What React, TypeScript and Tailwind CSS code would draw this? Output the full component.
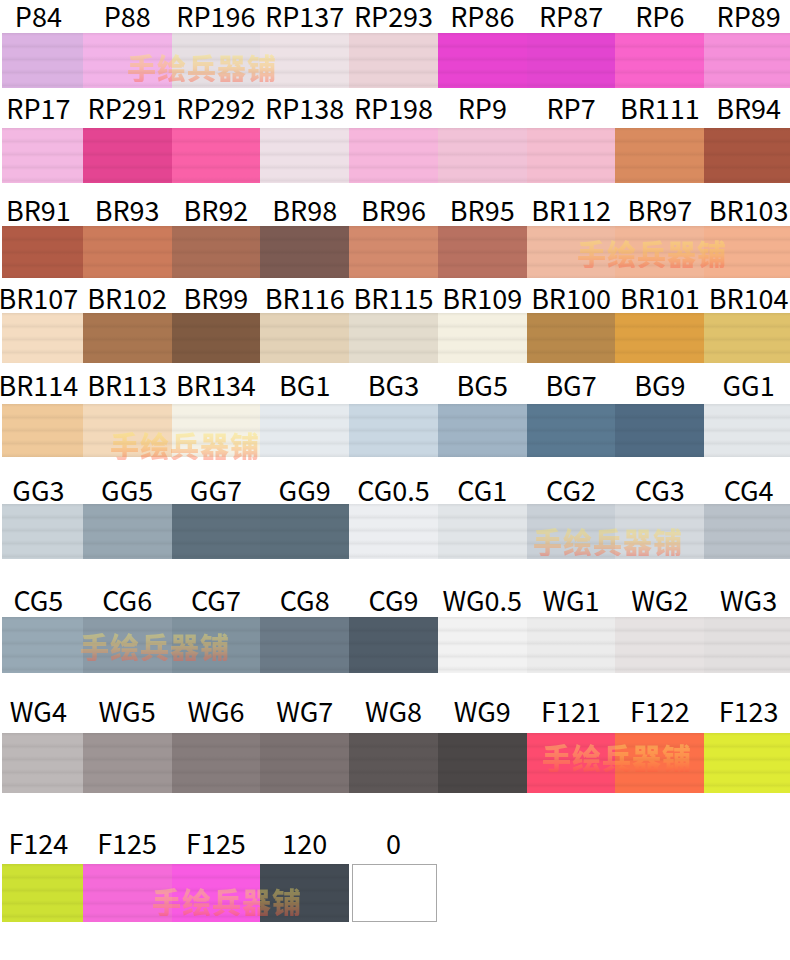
const STRIPES =
  "bg-[repeating-linear-gradient(180deg,rgba(0,0,0,0.06)_0px,rgba(0,0,0,0)_3px,rgba(0,0,0,0)_10px,rgba(0,0,0,0.04)_13px)]";

type Swatch = { name: string; bg: string; extra?: string };
type Row = { mt: string; gap: string; h: string; items: Swatch[] };

const rows: Row[] = [
  {
    mt: "mt-[1px]",
    gap: "mt-[2px]",
    h: "h-[55px]",
    items: [
      { name: "P84", bg: "bg-[#dbb2e2]" },
      { name: "P88", bg: "bg-[#f2b3e8]" },
      { name: "RP196", bg: "bg-[#e6dfe3]" },
      { name: "RP137", bg: "bg-[#ede2e6]" },
      { name: "RP293", bg: "bg-[#ebd2d7]" },
      { name: "RP86", bg: "bg-[#e844d1]" },
      { name: "RP87", bg: "bg-[#e345d0]" },
      { name: "RP6", bg: "bg-[#f964cb]" },
      { name: "RP89", bg: "bg-[#f590da]" },
    ],
  },
  {
    mt: "mt-[5px]",
    gap: "mt-[5px]",
    h: "h-[55px]",
    items: [
      { name: "RP17", bg: "bg-[#f3b8e2]" },
      { name: "RP291", bg: "bg-[#e44592]" },
      { name: "RP292", bg: "bg-[#fa61a8]" },
      { name: "RP138", bg: "bg-[#eee0e7]" },
      { name: "RP198", bg: "bg-[#f6b6dc]" },
      { name: "RP9", bg: "bg-[#f1c2d7]" },
      { name: "RP7", bg: "bg-[#f4bdd0]" },
      { name: "BR111", bg: "bg-[#d98b5f]" },
      { name: "BR94", bg: "bg-[#a85641]" },
    ],
  },
  {
    mt: "mt-[12px]",
    gap: "mt-[1px]",
    h: "h-[52px]",
    items: [
      { name: "BR91", bg: "bg-[#b15b46]" },
      { name: "BR93", bg: "bg-[#cc7b5b]" },
      { name: "BR92", bg: "bg-[#a96d56]" },
      { name: "BR98", bg: "bg-[#7c5b53]" },
      { name: "BR96", bg: "bg-[#d38a6d]" },
      { name: "BR95", bg: "bg-[#b87161]" },
      { name: "BR112", bg: "bg-[#efbaa2]" },
      { name: "BR97", bg: "bg-[#f1b698]" },
      { name: "BR103", bg: "bg-[#f3b18f]" },
    ],
  },
  {
    mt: "mt-[5px]",
    gap: "mt-[0px]",
    h: "h-[50px]",
    items: [
      { name: "BR107", bg: "bg-[#f4dcc1]" },
      { name: "BR102", bg: "bg-[#a97650]" },
      { name: "BR99", bg: "bg-[#805b42]" },
      { name: "BR116", bg: "bg-[#e3d2b7]" },
      { name: "BR115", bg: "bg-[#e3dccd]" },
      { name: "BR109", bg: "bg-[#f4f0e1]" },
      { name: "BR100", bg: "bg-[#b8894b]" },
      { name: "BR101", bg: "bg-[#dea143]" },
      { name: "BR104", bg: "bg-[#dfc26c]" },
    ],
  },
  {
    mt: "mt-[7px]",
    gap: "mt-[4px]",
    h: "h-[53px]",
    items: [
      { name: "BR114", bg: "bg-[#efc99a]" },
      { name: "BR113", bg: "bg-[#f3d9ba]" },
      { name: "BR134", bg: "bg-[#f4f1e5]" },
      { name: "BG1", bg: "bg-[#e5eaee]" },
      { name: "BG3", bg: "bg-[#c9d7e2]" },
      { name: "BG5", bg: "bg-[#a0b4c5]" },
      { name: "BG7", bg: "bg-[#5a7991]" },
      { name: "BG9", bg: "bg-[#506b83]" },
      { name: "GG1", bg: "bg-[#e3e7ea]" },
    ],
  },
  {
    mt: "mt-[18px]",
    gap: "-mt-[1px]",
    h: "h-[55px]",
    items: [
      { name: "GG3", bg: "bg-[#c9d2d8]" },
      { name: "GG5", bg: "bg-[#97a7b2]" },
      { name: "GG7", bg: "bg-[#5e707d]" },
      { name: "GG9", bg: "bg-[#5c6f7c]" },
      { name: "CG0.5", bg: "bg-[#eceef1]" },
      { name: "CG1", bg: "bg-[#e1e5e8]" },
      { name: "CG2", bg: "bg-[#c9d0d7]" },
      { name: "CG3", bg: "bg-[#d4d9de]" },
      { name: "CG4", bg: "bg-[#b9c1c9]" },
    ],
  },
  {
    mt: "mt-[26px]",
    gap: "mt-[2px]",
    h: "h-[56px]",
    items: [
      { name: "CG5", bg: "bg-[#97a9b5]" },
      { name: "CG6", bg: "bg-[#8b9ba7]" },
      { name: "CG7", bg: "bg-[#80929e]" },
      { name: "CG8", bg: "bg-[#6b7a87]" },
      { name: "CG9", bg: "bg-[#505d69]" },
      { name: "WG0.5", bg: "bg-[#f2f2f2]" },
      { name: "WG1", bg: "bg-[#ececec]" },
      { name: "WG2", bg: "bg-[#e6e2e2]" },
      { name: "WG3", bg: "bg-[#e2dfdf]" },
    ],
  },
  {
    mt: "mt-[23px]",
    gap: "mt-[7px]",
    h: "h-[60px]",
    items: [
      { name: "WG4", bg: "bg-[#bdb8b8]" },
      { name: "WG5", bg: "bg-[#9e9595]" },
      { name: "WG6", bg: "bg-[#867c7c]" },
      { name: "WG7", bg: "bg-[#7b7171]" },
      { name: "WG8", bg: "bg-[#5d5757]" },
      { name: "WG9", bg: "bg-[#4b4747]" },
      { name: "F121", bg: "bg-[#fd4b6f]" },
      { name: "F122", bg: "bg-[#fc7049]" },
      { name: "F123", bg: "bg-[#dfeb35]" },
    ],
  },
  {
    mt: "mt-[35px]",
    gap: "mt-[6px]",
    h: "h-[58px]",
    items: [
      { name: "F124", bg: "bg-[#cde134]" },
      { name: "F125", bg: "bg-[#f56bd9]" },
      { name: "F125", bg: "bg-[#f85be2]" },
      { name: "120", bg: "bg-[#434b54]" },
      { name: "0", bg: "bg-white", extra: "border border-[#a8a8a8] ml-[3px] mr-[1px]" },
    ],
  },
];

// watermark spots over the chart
const marks = [
  "left-[127px] top-[52px]",
  "left-[577px] top-[238px]",
  "left-[110px] top-[430px]",
  "left-[533px] top-[526px]",
  "left-[80px] top-[631px]",
  "left-[542px] top-[742px]",
  "left-[152px] top-[886px]",
];

export default function App() {
  return (
    <div className="relative w-[790px] h-[960px] overflow-hidden bg-white font-['Noto_Sans_CJK_SC','Noto_Sans',sans-serif] text-black">
      <div className="w-[799px] -ml-[6px]">
        {rows.map((row, r) => (
          <div key={r} className={row.mt}>
            {/* labels */}
            <div className="grid grid-cols-9">
              {row.items.map((s, i) => (
                <div key={i} className="flex justify-center h-[30px]">
                  <span className="whitespace-nowrap text-[27px] leading-[30px]">{s.name}</span>
                </div>
              ))}
            </div>
            {/* swatches */}
            <div className={`grid grid-cols-9 ${row.gap} ${row.h}`}>
              {row.items.map((s, i) => (
                <div
                  key={i}
                  className={`${s.bg} ${s.extra ? s.extra : STRIPES} ${i === 0 ? "ml-[8px]" : ""}`}
                />
              ))}
            </div>
          </div>
        ))}
      </div>

      {marks.map((m, i) => (
        <span
          key={i}
          className={`absolute ${m} whitespace-nowrap text-[29px] leading-[30px] font-black tracking-[1px] font-['Noto_Sans_CJK_SC',sans-serif] bg-gradient-to-b from-[#fff06a] via-[#ffc050] to-[#ff5a40] bg-clip-text text-transparent opacity-40`}
        >
          手绘兵器铺
        </span>
      ))}
    </div>
  );
}
